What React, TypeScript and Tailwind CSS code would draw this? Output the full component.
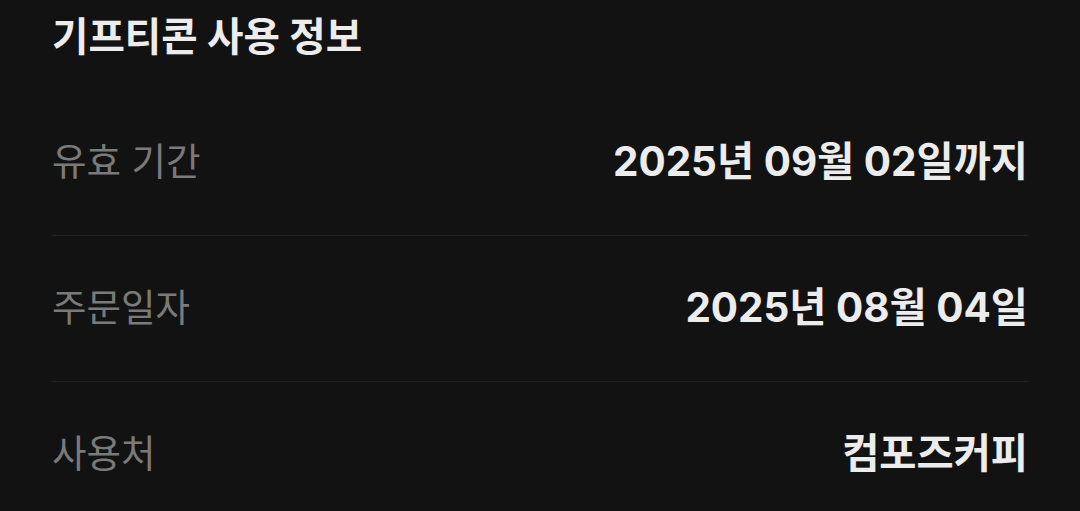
export default function App() {
  const rows = [
    { label: "유효 기간", value: "2025년 09월 02일까지" },
    { label: "주문일자", value: "2025년 08월 04일" },
    { label: "사용처", value: "컴포즈커피" },
  ];

  return (
    <div className="h-[511px] w-[1080px] overflow-hidden bg-[#121212] pl-[52px] pr-[52px] font-['Inter','Noto_Sans_CJK_KR',sans-serif]">
      <div className="flex h-[76px] items-center text-[39.6px] font-bold text-[#ececec]">
        기프티콘 사용 정보
      </div>
      <div className="mt-[13px]">
        {rows.map((r, i) => (
          <div
            key={r.label}
            className={`flex h-[146px] items-center justify-between ${i > 0 ? "border-t border-[#222222]" : ""}`}
          >
            <span className="text-[37.5px] text-[#7a7a7a]">{r.label}</span>
            <span className="text-[40.4px] font-bold text-[#ececec]">{r.value}</span>
          </div>
        ))}
      </div>
    </div>
  );
}
